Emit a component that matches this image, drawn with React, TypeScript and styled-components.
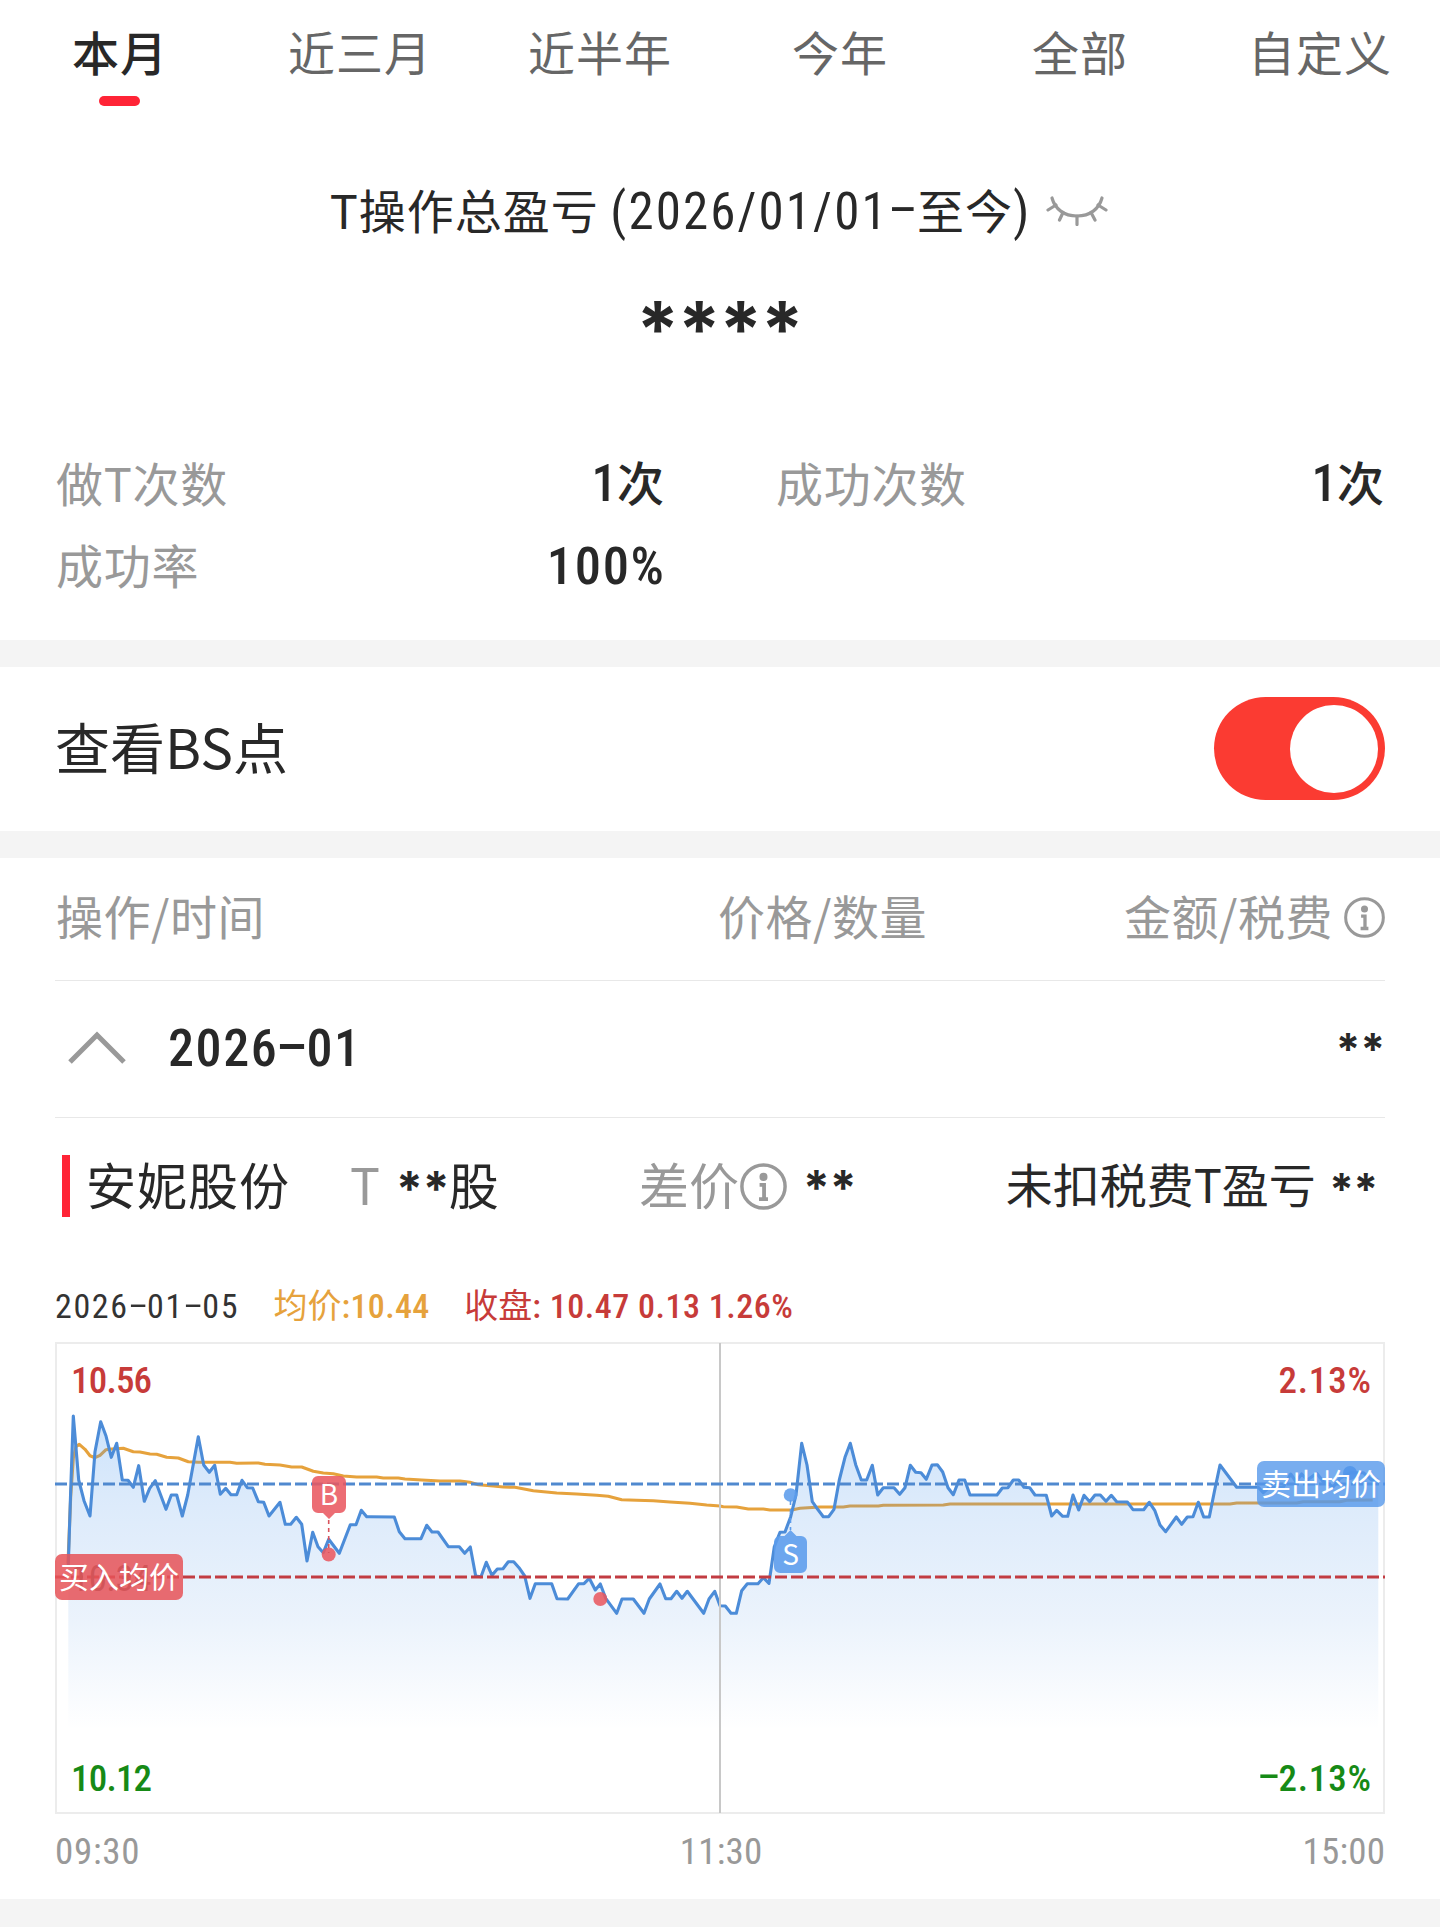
import React from "react";
import styled, { createGlobalStyle } from "styled-components";

const cjk = '"Noto Sans CJK SC", "Noto Sans", sans-serif';
const ink = "#282828";
const muted = "#999";
const red = "#c73b39";
const green = "#168a16";
const orange = "#e6a23c";

const Global = createGlobalStyle`
  *, *::before, *::after { box-sizing: border-box; }
  body { margin: 0; background: #fff; color: ${ink}; font-family: ${cjk}; }
`;

const Page = styled.main`
  width: 1440px;
  height: 1927px;
  overflow: hidden;
  display: flex;
  flex-direction: column;
  background: #fff;
`;

const Divider = styled.div<{ $h: number }>`
  height: ${(p) => p.$h}px;
  flex: none;
  background: #f4f4f4;
`;

const Figures = styled.span<{ $size: number; $weight?: number; $track?: number; $after?: number }>`
  font-family: Roboto, ${cjk};
  font-size: ${(p) => p.$size}px;
  font-weight: ${(p) => p.$weight ?? 400};
  font-stretch: 75%;
  letter-spacing: ${(p) => p.$track ?? 0}px;
  margin-right: ${(p) => (p.$after ?? 0) - (p.$track ?? 0)}px;
  line-height: 0;
  white-space: pre;
`;

const Dash = styled.span`
  display: inline-block;
  width: 0.54em;
  text-align: center;
  letter-spacing: 0;
  transform: translateY(-0.07em) scaleX(2.1);
`;

/* Digits with wide hyphens, as in dates and negative values. */
function Num(props: { size: number; weight?: number; track?: number; after?: number; children: string }) {
  const parts = props.children.split("-");
  return (
    <Figures $size={props.size} $weight={props.weight} $track={props.track} $after={props.after}>
      {parts.map((part, i) => (
        <React.Fragment key={i}>
          {i > 0 && <Dash>-</Dash>}
          {part}
        </React.Fragment>
      ))}
    </Figures>
  );
}

const Mask = styled.span<{ $size: number; $track?: number; $drop?: number; $left?: number; $right?: number }>`
  display: inline-block;
  font-family: Inter, sans-serif;
  font-weight: 700;
  font-size: ${(p) => p.$size}px;
  letter-spacing: ${(p) => p.$track ?? 0}px;
  line-height: 1;
  margin-left: ${(p) => p.$left ?? 0}px;
  margin-right: ${(p) => (p.$right ?? 0) - (p.$track ?? 0)}px;
  transform: translateY(${(p) => p.$drop ?? 0}px);
`;

/* ---------- summary ---------- */

const Summary = styled.section`
  height: 640px;
  flex: none;
  display: flex;
  flex-direction: column;
`;

const Tabs = styled.nav`
  display: grid;
  grid-template-columns: repeat(6, 1fr);
  padding-top: 21px;
  height: 106px;
`;

const Tab = styled.button<{ $active: boolean }>`
  display: flex;
  flex-direction: column;
  align-items: center;
  padding: 0;
  border: 0;
  background: none;
  font-family: ${cjk};
  font-size: 47px;
  line-height: 60px;
  letter-spacing: 1px;
  font-weight: ${(p) => (p.$active ? 500 : 400)};
  color: ${(p) => (p.$active ? ink : "#666")};

  &::after {
    content: "";
    width: 41px;
    height: 10px;
    margin: 15px 1px 0 0;
    border-radius: 5px;
    background: ${(p) => (p.$active ? "#ff2436" : "transparent")};
  }
`;

const Title = styled.h1`
  display: flex;
  align-items: center;
  justify-content: center;
  gap: 17px;
  margin: 73px 0 0;
  padding-right: 2px;
  height: 60px;
  font-size: 47px;
  line-height: 60px;
  font-weight: 400;
  letter-spacing: 1px;
  white-space: pre;

  svg { margin-top: 3px; }
`;

const Total = styled.div`
  display: flex;
  justify-content: center;
  height: 80px;
  margin-top: 38px;
  padding-top: 14px;
`;

const Stats = styled.dl`
  display: grid;
  grid-template-columns: 1fr 1fr;
  grid-auto-rows: 82px;
  margin: 84px 0 0;
`;

const Stat = styled.div`
  display: flex;
  align-items: center;
  justify-content: space-between;
  padding: 0 56px 0 56px;
  font-size: 47px;
  line-height: 60px;
`;

const StatLabel = styled.dt`
  color: ${muted};
  letter-spacing: 0.7px;
`;

const StatValue = styled.dd<{ $lift?: number }>`
  margin: 0;
  padding-bottom: ${(p) => p.$lift ?? 3}px;
  font-weight: 500;
`;

/* ---------- toggle ---------- */

const ToggleRow = styled.section`
  height: 164px;
  flex: none;
  display: flex;
  align-items: center;
  justify-content: space-between;
  padding: 0 55px 1px 55px;
`;

const ToggleLabel = styled.span`
  font-size: 55px;
  line-height: 70px;
  padding-bottom: 8px;
`;

const Switch = styled.button`
  display: flex;
  align-items: center;
  justify-content: flex-end;
  width: 171px;
  height: 103px;
  padding: 0 7px 0 0;
  border: 0;
  border-radius: 52px;
  background: #fb3b32;
`;

const Knob = styled.span`
  width: 88px;
  height: 88px;
  border-radius: 50%;
  background: #fff;
`;

/* ---------- table ---------- */

const Columns = styled.div`
  display: grid;
  grid-template-columns: 662px 1fr auto;
  align-items: center;
  height: 123px;
  margin: 0 55px;
  padding: 0 0 8px 1px;
  border-bottom: 1px solid #e8e8e8;
  font-size: 47px;
  line-height: 60px;
  letter-spacing: 0.5px;
  color: ${muted};
`;

const WithInfo = styled.span`
  display: flex;
  align-items: center;
  gap: 11px;

  svg { margin-top: 5px; }
`;

const MonthRow = styled.div`
  display: flex;
  align-items: center;
  height: 137px;
  margin: 0 55px;
  padding: 0 0 4px 13px;
  border-bottom: 1px solid #e8e8e8;
`;

const Month = styled.span`
  flex: 1;
  margin-left: 42px;
  padding-bottom: 7px;
  font-size: 52px;
  line-height: 60px;
`;

const StockRow = styled.div`
  display: grid;
  grid-template-columns: 288px 289px auto 1fr;
  align-items: center;
  height: 136px;
  flex: none;
  padding: 0 62px 0 62px;
  font-size: 50px;
  line-height: 64px;
  white-space: pre;
`;

const StockName = styled.strong`
  display: flex;
  align-items: center;
  gap: 16px;
  font-weight: 400;
  letter-spacing: 1px;
  line-height: 64px;

  &::before {
    content: "";
    width: 8px;
    height: 62px;
    background: #ff2436;
  }
`;

const Lift = styled.span<{ $size?: number; $track?: number }>`
  display: flex;
  align-items: center;
  font-size: ${(p) => p.$size ?? 50}px;
  letter-spacing: ${(p) => p.$track ?? 0}px;
  padding-bottom: 6px;

  svg { margin: 6px 0 0 1px; }
`;

const Profit = styled(Lift)`
  justify-self: end;
`;

const Soft = styled.span`
  color: ${muted};
`;

/* ---------- chart ---------- */

const Meta = styled.div`
  display: flex;
  align-items: center;
  height: 88px;
  flex: none;
  padding: 11px 55px 0;
  font-size: 34px;
  line-height: 44px;
  white-space: pre;
`;

const MetaItem = styled.span<{ $color: string; $left?: number }>`
  color: ${(p) => p.$color};
  margin-left: ${(p) => p.$left ?? 0}px;
`;

const Plot = styled.div`
  position: relative;
  width: 1330px;
  height: 472px;
  flex: none;
  margin: 0 55px;

  svg { display: block; }
`;

const Corner = styled.span<{ $side: "left" | "right"; $top: number; $color: string }>`
  position: absolute;
  ${(p) => p.$side}: ${(p) => (p.$side === "left" ? 16 : 14)}px;
  top: ${(p) => p.$top}px;
  height: 40px;
  line-height: 40px;
  font-family: Roboto, sans-serif;
  font-size: 37px;
  color: ${(p) => p.$color};
`;

const AvgBadge = styled.span<{ $side: "left" | "right"; $top: number; $bg: string }>`
  position: absolute;
  ${(p) => p.$side}: 0;
  top: ${(p) => p.$top}px;
  width: 128px;
  height: 46px;
  border-radius: 7px;
  background: ${(p) => p.$bg};
  color: #fff;
  font-size: 30px;
  line-height: 42px;
  text-align: center;
`;

const Axis = styled.div`
  display: flex;
  justify-content: space-between;
  height: 85px;
  flex: none;
  padding: 14px 55px 0;
  line-height: 40px;
  color: ${muted};
`;

const Tick = styled.span`
  font-size: 37px;
`;

/* ---------- icons ---------- */

function ClosedEye() {
  return (
    <svg width="62" height="30" viewBox="0 0 62 30" fill="none" stroke="#999" strokeWidth="3.2" strokeLinecap="round">
      <path d="M6 2C9 13 18 20 31 20S53 13 56 2" />
      <path d="M10 9 2 14M17 16.5 13.5 24M31 20v8.5M45 16.5 49 24M52 9l8 5" />
    </svg>
  );
}

function Info({ size }: { size: number }) {
  return (
    <svg width={size} height={size} viewBox="0 0 42 42" fill="none" stroke="#999">
      <circle cx="21" cy="21" r="19.3" strokeWidth="3.1" />
      <circle cx="21" cy="12.4" r="3.6" fill="#999" stroke="none" />
      <path d="M17.5 19.5H21.5V32M17 32.3H25" strokeWidth="3.4" />
    </svg>
  );
}

function ChevronUp() {
  return (
    <svg width="58" height="33" viewBox="0 0 58 33" fill="none" stroke="#999" strokeWidth="5">
      <path d="M2 31 29 4 56 31" />
    </svg>
  );
}

/* ---------- series ---------- */

type P = [number, number];
const place = (ox: number, oy: number, flat: number[]): P[] => {
  const out: P[] = [];
  for (let i = 0; i < flat.length; i += 2) out.push([ox + flat[i] / 3, oy + flat[i + 1] / 3]);
  return out;
};
const line = (pts: P[]) => "M" + pts.map(([x, y]) => `${x.toFixed(1)} ${y.toFixed(1)}`).join("L");

const price: P[] = [
  ...place(40, 1330, [
    85, 705, 92, 480, 100, 258, 116, 450, 132, 512, 150, 558, 165, 365, 182, 275, 198, 318, 214, 382, 230, 340, 247, 450,
    264, 451, 280, 472, 296, 407, 313, 514, 329, 475, 346, 452, 378, 538, 394, 495, 410, 495, 427, 558, 443, 495, 475,
    320, 491, 405, 508, 427, 524, 406, 541, 493, 557, 475, 573, 494, 590, 494, 606, 451, 622, 473, 638, 474, 655, 515,
    671, 517, 687, 558, 720, 517, 736, 583, 752, 583, 769, 562, 785, 583, 801, 693, 818, 607, 834, 650, 850, 668, 866,
    628, 898, 670, 931, 584, 948, 584, 964, 541, 980, 560,
  ]),
  ...place(370, 1400, [
    0, 350, 73, 351, 88, 395, 105, 416, 153, 416, 170, 376, 186, 396, 204, 396, 235, 440, 268, 440, 284, 460, 301, 441,
    317, 528, 333, 530, 349, 487, 366, 526, 382, 507, 399, 506, 415, 485, 431, 485, 447, 503, 464, 528, 480, 595, 496,
    551, 545, 551, 561, 596, 593, 597, 626, 551, 642, 551, 658, 535, 676, 570, 691, 552, 707, 595, 740, 640, 756, 597,
    790, 597, 822, 640, 838, 597, 870, 552, 887, 596, 903, 596, 920, 574, 936, 595, 952, 574, 1001, 640, 1017, 597,
    1034, 574, 1050, 617,
  ]),
  ...place(720, 1400, [
    16, 618, 33, 640, 49, 640, 65, 572, 82, 551, 114, 551, 130, 533, 147, 550, 163, 440, 180, 397, 195, 396, 212, 350,
    228, 285, 245, 130, 261, 195, 277, 305, 293, 328, 310, 350, 326, 350, 342, 328, 358, 240, 375, 172, 391, 130, 407,
    194, 424, 240, 440, 240, 457, 196, 473, 285, 490, 263, 522, 263, 539, 283, 555, 263, 571, 196, 587, 217, 603, 218,
    619, 238, 636, 195, 652, 194, 668, 216, 684, 263, 700, 284, 717, 240, 734, 240, 750, 285, 831, 285, 847, 264, 864,
    263, 880, 240, 896, 240, 912, 262, 929, 263, 945, 285, 979, 286,
  ]),
  ...place(1050, 1330, [
    5, 558, 20, 541, 38, 559, 53, 559, 69, 495, 86, 540, 102, 496, 119, 515, 135, 495, 151, 495, 168, 514, 184, 496,
    200, 515, 232, 516, 249, 539, 281, 539, 298, 517, 314, 541, 330, 585, 347, 605, 379, 561, 395, 583, 412, 561, 429,
    560, 445, 517, 461, 561, 478, 561, 494, 480, 510, 405, 560, 472, 625, 472, 640, 488, 657, 472, 700, 472, 722, 432,
    738, 455, 755, 432, 772, 450, 800, 430, 820, 455, 850, 470, 870, 445, 901, 428, 940, 428, 965, 450, 985, 450,
  ]),
];

const average: P[] = [
  ...place(40, 1330, [
    84, 700, 92, 500, 100, 385, 108, 350, 118, 343, 135, 358, 150, 377, 165, 383, 180, 376, 198, 359, 215, 357, 250,
    355, 280, 365, 300, 366, 330, 372, 350, 373, 380, 382, 415, 384, 445, 395, 475, 397, 570, 397, 590, 400, 655, 399,
    675, 403, 720, 405, 755, 411, 785, 411, 820, 424, 850, 429, 880, 431, 910, 438, 950, 441, 990, 441,
  ]),
  ...place(370, 1400, [
    20, 231, 40, 234, 85, 234, 105, 237, 155, 240, 210, 243, 270, 243, 300, 247, 325, 254, 370, 258, 400, 261, 435, 262,
    490, 272, 560, 279, 620, 282, 680, 286, 715, 289, 755, 299, 800, 301, 850, 302, 900, 306, 960, 310, 1010, 315, 1050,
    318,
  ]),
  ...place(720, 1400, [
    10, 320, 50, 321, 85, 327, 130, 327, 150, 330, 215, 330, 240, 325, 300, 321, 370, 321, 390, 318, 475, 318, 490, 316,
    670, 315, 690, 312, 990, 312,
  ]),
  ...place(1050, 1330, [5, 522, 540, 522, 560, 519, 740, 519, 760, 515, 870, 515, 890, 511, 968, 510]),
];

function IntradayChart() {
  const priceLine = line(price);
  return (
    <svg width="1330" height="472" viewBox="55 1342 1330 472" fill="none">
      <defs>
        <linearGradient id="fade" gradientUnits="userSpaceOnUse" x1="0" y1="1415" x2="0" y2="1730">
          <stop offset="0" stopColor="#4a9cf4" stopOpacity="0.28" />
          <stop offset="0.28" stopColor="#4a94ea" stopOpacity="0.19" />
          <stop offset="0.65" stopColor="#4a90e2" stopOpacity="0.11" />
          <stop offset="1" stopColor="#4a90e2" stopOpacity="0" />
        </linearGradient>
      </defs>
      <rect x="56" y="1343" width="1328" height="470" stroke="#ececec" strokeWidth="2" />
      <path d={line(average)} stroke={orange} strokeWidth="3.1" strokeLinejoin="round" />
      <path d={`${priceLine}L1378.3 1730L68.3 1730Z`} fill="url(#fade)" />
      <path d={priceLine} stroke="#4c8cd8" strokeWidth="3.1" strokeLinejoin="round" />
      <path d="M720 1343V1813" stroke="#c8c8c8" strokeWidth="2" />
      <path d="M55 1484H1385" stroke="#5089cf" strokeWidth="3.1" strokeDasharray="12 4" />
      <path d="M55 1577H1385" stroke="#c23c42" strokeWidth="3.1" strokeDasharray="12 4" />

      <g fill="#e9575f" fillOpacity="0.87">
        <path d="M318 1476H340a6 6 0 0 1 6 6V1507a6 6 0 0 1-6 6H335L329 1519L323 1513H318a6 6 0 0 1-6-6V1482a6 6 0 0 1 6-6Z" />
        <circle cx="328.7" cy="1554.5" r="7" />
        <circle cx="600.3" cy="1599" r="7" />
      </g>
      <path d="M328.7 1520V1553" stroke="#d9535c" strokeWidth="1.6" strokeDasharray="4 4" />

      <g fill="#5b9cec" fillOpacity="0.88">
        <path d="M780 1536H784.5L790.5 1530L796.5 1536H801a6 6 0 0 1 6 6V1567a6 6 0 0 1-6 6H780a6 6 0 0 1-6-6V1542a6 6 0 0 1 6-6Z" />
        <circle cx="790.5" cy="1495" r="6.8" />
        <circle cx="1350" cy="1473" r="7" fill="#3f8ae6" />
      </g>
      <path d="M790.5 1500V1530" stroke="#5b9cec" strokeWidth="1.6" strokeDasharray="5 4" />

      <g fill="#fff" fontFamily="Noto Sans CJK SC, sans-serif" fontSize="28" textAnchor="middle">
        <text x="329" y="1505">B</text>
        <text x="790.5" y="1565">S</text>
      </g>
    </svg>
  );
}

const ranges = ["本月", "近三月", "近半年", "今年", "全部", "自定义"];

export default function App() {
  return (
    <>
      <Global />
      <Page>
        <Summary>
          <Tabs>
            {ranges.map((r, i) => (
              <Tab key={r} $active={i === 0}>{r}</Tab>
            ))}
          </Tabs>
          <Title>
            <span>T操作总盈亏 <Num size={51} track={2.1} after={3}>(2026/01/01-</Num>至今<Num size={51}>)</Num></span>
            <ClosedEye />
          </Title>
          <Total>
            <Mask $size={77} $track={-1.5}>****</Mask>
          </Total>
          <Stats>
            <Stat>
              <StatLabel>做T次数</StatLabel>
              <StatValue><Num size={51} weight={500}>1</Num>次</StatValue>
            </Stat>
            <Stat>
              <StatLabel>成功次数</StatLabel>
              <StatValue><Num size={51} weight={500}>1</Num>次</StatValue>
            </Stat>
            <Stat>
              <StatLabel>成功率</StatLabel>
              <StatValue $lift={0}><Num size={52.5} weight={500} track={1.7}>100%</Num></StatValue>
            </Stat>
          </Stats>
        </Summary>

        <Divider $h={27} />

        <ToggleRow>
          <ToggleLabel>查看BS点</ToggleLabel>
          <Switch role="switch" aria-checked="true"><Knob /></Switch>
        </ToggleRow>

        <Divider $h={27} />

        <Columns>
          <span>操作/时间</span>
          <span>价格/数量</span>
          <WithInfo>金额/税费<Info size={41} /></WithInfo>
        </Columns>
        <MonthRow>
          <ChevronUp />
          <Month><Num size={52} weight={500} track={1.6}>2026-01</Num></Month>
          <Mask $size={44} $drop={2}>**</Mask>
        </MonthRow>
        <StockRow>
          <StockName><Lift $track={1}>安妮股份</Lift></StockName>
          <Lift><Soft>T</Soft><Mask $size={48} $left={16} $right={-1} $drop={6}>**</Mask>股</Lift>
          <Lift><Soft>差价</Soft><Info size={47} /><Mask $size={48} $left={16} $drop={5}>**</Mask></Lift>
          <Profit $size={47}>未扣税费T盈亏<Mask $size={44} $track={-0.5} $left={13.5} $drop={6}>**</Mask></Profit>
        </StockRow>

        <Meta>
          <MetaItem $color="#333"><Num size={34} track={1.65}>2026-01-05</Num></MetaItem>
          <MetaItem $color={orange} $left={36}>均价<Num size={34} weight={500} track={0.3}>:10.44</Num></MetaItem>
          <MetaItem $color={red} $left={35}>收盘<Num size={34} weight={500} track={0.5}>: 10.47 0.13 1.26%</Num></MetaItem>
        </Meta>
        <Plot>
          <Corner $side="left" $top={217} $color="#555"><Num size={37} track={-0.6}>10.34</Num></Corner>
          <IntradayChart />
          <Corner $side="left" $top={19} $color={red}><Num size={37} weight={500} track={-0.8}>10.56</Num></Corner>
          <Corner $side="right" $top={19} $color={red}><Num size={37} weight={500} track={0.8}>2.13%</Num></Corner>
          <Corner $side="left" $top={417} $color={green}><Num size={37} weight={500} track={-0.8}>10.12</Num></Corner>
          <Corner $side="right" $top={417} $color={green}><Num size={37} weight={500} track={0.8}>-2.13%</Num></Corner>
          <AvgBadge $side="left" $top={212} $bg="rgba(230, 84, 88, 0.86)">买入均价</AvgBadge>
          <AvgBadge $side="right" $top={119} $bg="rgba(86, 152, 235, 0.8)">卖出均价</AvgBadge>
        </Plot>
        <Axis>
          <Tick><Num size={37} track={0.7}>09:30</Num></Tick>
          <Tick><Num size={37} track={0.2}>11:30</Num></Tick>
          <Tick><Num size={37} track={0.2}>15:00</Num></Tick>
        </Axis>
        <Divider $h={28} />
      </Page>
    </>
  );
}
